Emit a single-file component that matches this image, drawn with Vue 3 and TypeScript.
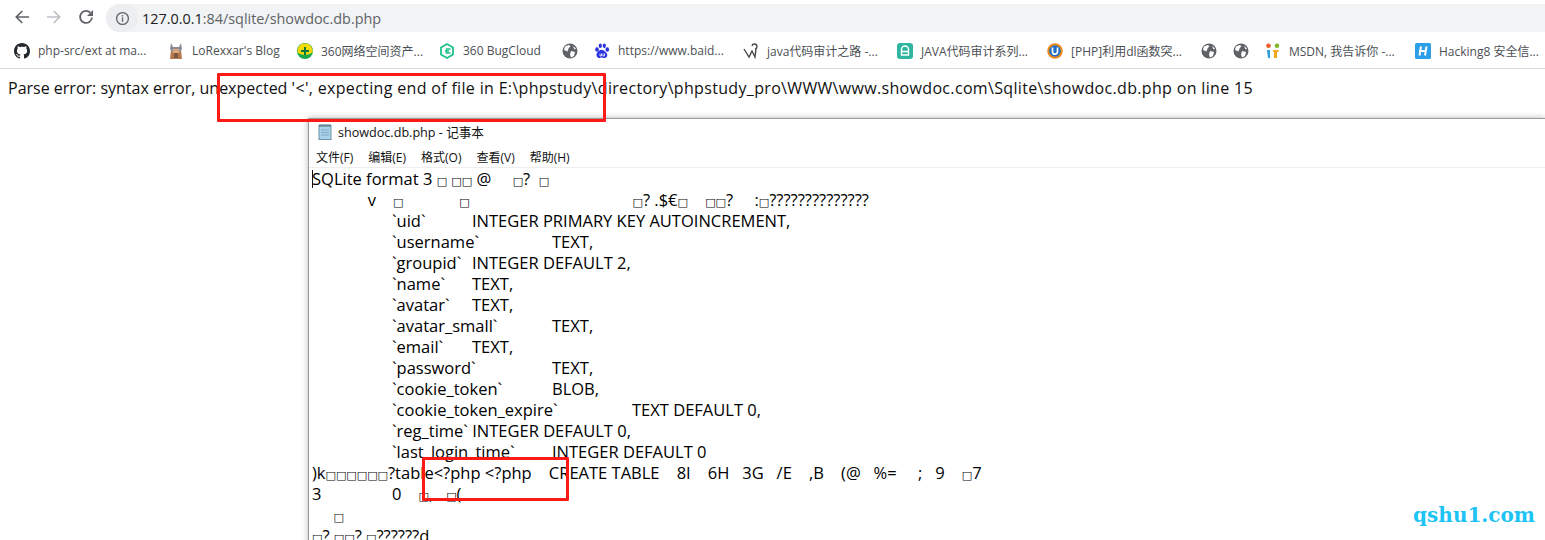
<script setup lang="ts">
interface Mark { icon: string; label: string; width: number }
const marks: Mark[] = [
  { icon: 'github', label: 'php-src/ext at ma...', width: 154 },
  { icon: 'blog', label: "LoRexxar's Blog", width: 129 },
  { icon: 'q360', label: '360网络空间资产...', width: 142 },
  { icon: 'bug', label: '360 BugCloud', width: 123 },
  { icon: 'globe', label: '', width: 32 },
  { icon: 'baidu', label: 'https://www.baid...', width: 149 },
  { icon: 'java', label: 'java代码审计之路 -...', width: 154 },
  { icon: 'lock', label: 'JAVA代码审计系列...', width: 150 },
  { icon: 'u', label: '[PHP]利用dl函数突...', width: 154 },
  { icon: 'globe', label: '', width: 32 },
  { icon: 'globe', label: '', width: 32 },
  { icon: 'msdn', label: 'MSDN, 我告诉你 -...', width: 150 },
  { icon: 'h', label: 'Hacking8 安全信...', width: 130 }
]
const menus = ['文件(F)', '编辑(E)', '格式(O)', '查看(V)', '帮助(H)']
const lines = [
  'SQLite format 3 □ □□ @     □?  □',
  '             v    □             □                                      □? .$€□    □□?     :□??????????????',
  '\t`uid`\tINTEGER PRIMARY KEY AUTOINCREMENT,',
  '\t`username`\tTEXT,',
  '\t`groupid`\tINTEGER DEFAULT 2,',
  '\t`name`\tTEXT,',
  '\t`avatar`\tTEXT,',
  '\t`avatar_small`\tTEXT,',
  '\t`email`\tTEXT,',
  '\t`password`\tTEXT,',
  '\t`cookie_token`\tBLOB,',
  '\t`cookie_token_expire`\tTEXT DEFAULT 0,',
  '\t`reg_time` INTEGER DEFAULT 0,',
  '\t`last_login_time`\tINTEGER DEFAULT 0',
  ')k□□□□□□?table<?php <?php    CREATE TABLE    8I    6H   3G   /E    ,B    (@   %=     ;   9    □7',
  '3\t0    □,   □(',
  '     □',
  '□? □□? □??????d'
]
const segmented = lines.map((l) => l.split(/(□)/).filter((s) => s.length > 0))
</script>

<template>
  <div class="page">
    <header class="toolbar">
      <svg class="nav" viewBox="0 0 16 16"><path d="M15 8H2.500M8.300 2 2.300 8l6 6" fill="none" stroke="#5f6368" stroke-width="1.700" /></svg>
      <svg class="nav" viewBox="0 0 16 16"><path d="M1 8h12.500M7.700 2l6 6-6 6" fill="none" stroke="#bdc1c6" stroke-width="1.700" /></svg>
      <svg class="nav" viewBox="0 0 16 16"><path d="M14 8.500A6 6 0 1 1 12.300 3.700" fill="none" stroke="#5f6368" stroke-width="1.800" /><path d="M15 1v6H9z" fill="#5f6368" /></svg>
      <div class="omnibox">
        <span class="info-chip">
          <svg viewBox="0 0 16 16" width="15" height="15"><circle cx="8" cy="8" r="6.300" fill="none" stroke="#5f6368" stroke-width="1.400" /><path d="M7.300 7h1.400v4.500H7.300zM7.300 4.300h1.400v1.500H7.300z" fill="#5f6368" /></svg>
        </span>
        <span class="url"><span class="host">127.0.0.1</span>:84/sqlite/showdoc.db.php</span>
      </div>
    </header>

    <nav class="bookmarks">
      <div v-for="(m, i) in marks" :key="i" class="mark" :style="{ width: m.width + 'px' }">
        <svg class="fav" viewBox="0 0 16 16">
          <template v-if="m.icon === 'github'">
            <path fill="#24292e" d="M8 0C3.580 0 0 3.580 0 8c0 3.540 2.290 6.530 5.470 7.590.4.070.55-.17.55-.38 0-.19-.01-.82-.01-1.490-2.010.37-2.530-.49-2.690-.94-.09-.23-.48-.94-.82-1.130-.28-.15-.68-.52-.01-.53.63-.01 1.080.58 1.230.82.720 1.210 1.870.87 2.330.66.070-.52.280-.87.510-1.070-1.780-.2-3.640-.89-3.640-3.950 0-.87.310-1.590.820-2.150-.08-.2-.36-1.020.080-2.120 0 0 .67-.21 2.200.820.640-.18 1.320-.27 2-.27s1.360.09 2 .27c1.530-1.040 2.200-.82 2.200-.82.440 1.100.160 1.920.080 2.120.510.560.820 1.270.820 2.150 0 3.070-1.870 3.750-3.650 3.950.290.250.540.730.540 1.480 0 1.070-.01 1.930-.01 2.200 0 .21.150.46.550.38A8.010 8.010 0 0 0 16 8c0-4.420-3.580-8-8-8z" />
          </template>
          <template v-else-if="m.icon === 'blog'">
            <path fill="#b57a50" d="M3 7h10l1 9H2z" /><path fill="#8d8d96" d="M3 0l2 4h6l2-4 1 6-2 3H4L2 6z" /><path fill="#e0a878" d="M5 6h6v4H5z" /><path fill="#7c5a42" d="M6 10h4v5H6z" />
          </template>
          <template v-else-if="m.icon === 'q360'">
            <circle cx="8" cy="8" r="8" fill="#1aa84a" /><path d="M.8 6A7.500 7.500 0 0 1 15.200 6L16 9c-3 2-5 3-8 3-3 0-5-1-7.500-2.500z" fill="#f5d90a" /><path d="M7 4h2v3h3v2H9v3H7V9H4V7h3z" fill="#0b7a35" />
          </template>
          <template v-else-if="m.icon === 'bug'">
            <path d="M8 1l6 3.500v7L8 15l-6-3.500v-7z" fill="none" stroke="#1fc28d" stroke-width="1.800" /><path d="M11.500 6H7.500v4h4M6 8h4" fill="none" stroke="#1fc28d" stroke-width="1.500" />
          </template>
          <template v-else-if="m.icon === 'globe'">
            <circle cx="8" cy="8" r="7.500" fill="#5f6368" /><path d="M3 3.500l3.500-1.500 2 1-2 2.500-1 3L2 7zM9 8l4 1-1 4-3 1.500-1-3zM11 3l3 2.500-1.500 1z" fill="#fff" />
          </template>
          <template v-else-if="m.icon === 'baidu'">
            <g fill="#2932e1"><ellipse cx="3" cy="6.500" rx="1.800" ry="2.300" /><ellipse cx="6.300" cy="2.800" rx="1.600" ry="2.300" /><ellipse cx="10.300" cy="2.800" rx="1.600" ry="2.300" /><ellipse cx="13.300" cy="6.500" rx="1.800" ry="2.300" /><path d="M8 7c2 0 3 1.500 4.500 3s1 5-2 5-1.500-.5-2.500-.5-1.500.5-3 .5-3.500-2.500-2-5S6 7 8 7z" /></g>
            <path d="M6 10.500v2.500h1.500v-2.500M9 10.500V13h1.500v-2.500" fill="none" stroke="#fff" stroke-width=".8" />
          </template>
          <template v-else-if="m.icon === 'java'">
            <path d="M1 6l5 8 3-6 3 6 1-8M9 3a2.500 2.500 0 1 1 3 3" fill="none" stroke="#4a4a4a" stroke-width="1.400" />
          </template>
          <template v-else-if="m.icon === 'lock'">
            <rect width="16" height="16" rx="3" fill="#2fb5a0" /><path d="M4.500 12V6.500a3.500 3.500 0 0 1 7 0V12zM4.500 8.500h7" fill="none" stroke="#fff" stroke-width="1.400" />
          </template>
          <template v-else-if="m.icon === 'u'">
            <circle cx="8" cy="8" r="7.800" fill="#f08a1d" /><circle cx="8" cy="8" r="5.800" fill="#1f6fc4" /><path d="M5.500 4.500v4.200a2.500 2.500 0 0 0 5 0V4.500" fill="none" stroke="#fff" stroke-width="1.700" />
          </template>
          <template v-else-if="m.icon === 'msdn'">
            <circle cx="3.500" cy="2.800" r="2.300" fill="#ec5b2a" /><circle cx="12" cy="2.800" r="2.300" fill="#7fb82d" /><path d="M2 7h3v8H3z" fill="#2a9fd8" /><path d="M8 7h6l-1 2h-1v6H9V9H8z" fill="#f2a81d" />
          </template>
          <template v-else-if="m.icon === 'h'">
            <rect width="16" height="16" rx="1.500" fill="#2b9fe8" /><path d="M6 3.500 4.500 12.500M11.500 3.500 10 12.500M4 8h7" fill="none" stroke="#fff" stroke-width="2" />
          </template>
        </svg>
        <span v-if="m.label" class="mark-label">{{ m.label }}</span>
      </div>
    </nav>

    <main class="content">
      <p class="error">Parse error: syntax error, unexpected <span class="error-tail">'&lt;', expecting end of file in E:\phpstudy\directory\phpstudy_pro\WWW\www.showdoc.com\Sqlite\showdoc.db.php on line 15</span></p>

      <section class="notepad">
        <div class="titlebar">
          <svg class="np-icon" viewBox="0 0 16 16"><rect x="2" y="1.500" width="12" height="14" fill="#a9d3ea" stroke="#6f93a8" /><path d="M3 0v3M5 0v3M7 0v3M9 0v3M11 0v3M13 0v3" stroke="#55707f" /><path d="M4 6h8M4 8.500h8M4 11h8" stroke="#7fa9c0" /></svg>
          <span>showdoc.db.php - 记事本</span>
        </div>
        <div class="menubar">
          <span v-for="m in menus" :key="m">{{ m }}</span>
        </div>
        <div class="editor">
          <span class="caret"></span>
          <div v-for="(segs, i) in segmented" :key="i" class="line"><template v-for="(s, j) in segs" :key="j"><span v-if="s === '□'" class="nul">□</span><template v-else>{{ s }}</template></template></div>
        </div>
      </section>

      <div class="mark-box box-a"></div>
      <div class="mark-box box-b"></div>
      <div class="watermark">qshu1.com</div>
    </main>
  </div>
</template>

<style>
html, body { margin: 0; background: #fff; overflow: hidden; }
</style>

<style scoped>
.page {
  width: 1545px;
  height: 540px;
  position: relative;
  overflow: hidden;
  background: #fff;
  font-family: "Open Sans", "Noto Sans CJK SC", sans-serif;
}
.toolbar {
  height: 34px;
  display: flex;
  align-items: center;
  padding-left: 14px;
  box-sizing: border-box;
}
.nav { width: 16px; height: 16px; margin-right: 16px; flex: none; }
.omnibox {
  margin-left: -4px;
  flex: 1;
  height: 28px;
  margin-top: 2px;
  background: #f1f3f4;
  border-radius: 14px 0 0 14px;
  display: flex;
  align-items: center;
  color: #5f6368;
  font-size: 14.400px;
}
.info-chip {
  width: 32px;
  height: 28px;
  border-radius: 14px;
  background: #eceef0;
  display: flex;
  align-items: center;
  justify-content: center;
  margin-right: 2px;
}
.url { margin-left: 2px; }
.host { color: #202124; }
.bookmarks {
  height: 35px;
  box-sizing: border-box;
  border-bottom: 1px solid #dcdcdc;
  display: flex;
  align-items: center;
  padding-left: 14px;
  padding-bottom: 1px;
}
.mark {
  display: flex;
  align-items: center;
  gap: 8px;
  flex: none;
  font-size: 12px;
  color: #4b4f54;
  white-space: nowrap;
}
.fav { width: 16px; height: 16px; flex: none; }
.content { position: relative; height: 471px; }
.error {
  margin: 0;
  padding: 9px 0 0 8px;
  font-size: 16px;
  line-height: 20px;
  color: #111;
  white-space: nowrap;
}
.error-tail { letter-spacing: .33px; }
.notepad {
  margin: 20px 0 0 308px;
  border-left: 1px solid #9a9a9a;
  border-top: 1px solid #9a9a9a;
  box-shadow: 0 0 6px rgba(0, 0, 0, .3);
  height: 460px;
  background: #fff;
  color: #111;
}
.titlebar {
  height: 25px;
  display: flex;
  align-items: center;
  gap: 5px;
  padding-left: 8px;
  font-size: 12.600px;
}
.np-icon { width: 16px; height: 16px; }
.menubar {
  height: 20px;
  margin-top: 3px;
  padding-left: 7px;
  display: flex;
  gap: 15px;
  font-size: 12px;
  border-bottom: 1px solid #eee;
  align-items: center;
}
.editor {
  position: relative;
  padding-left: 3px;
  font-size: 16.500px;
  line-height: 21px;
  color: #000;
}
.line { white-space: pre; tab-size: 80px; height: 21px; }
.nul { font-family: "DejaVu Sans", sans-serif; font-size: 11px; }
.caret { position: absolute; left: 3px; top: 2px; width: 1px; height: 18px; background: #111; }
.mark-box { position: absolute; border: 3px solid #fb1a16; box-sizing: border-box; border-radius: 1px; }
.box-a { left: 217px; top: 4px; width: 389px; height: 49px; }
.box-b { left: 422px; top: 388px; width: 147px; height: 44px; }
.watermark {
  position: absolute;
  right: 10px;
  top: 434px;
  font-family: "DejaVu Serif", serif;
  font-weight: 700;
  font-size: 20px;
  color: #1cc3f5;
}
</style>
